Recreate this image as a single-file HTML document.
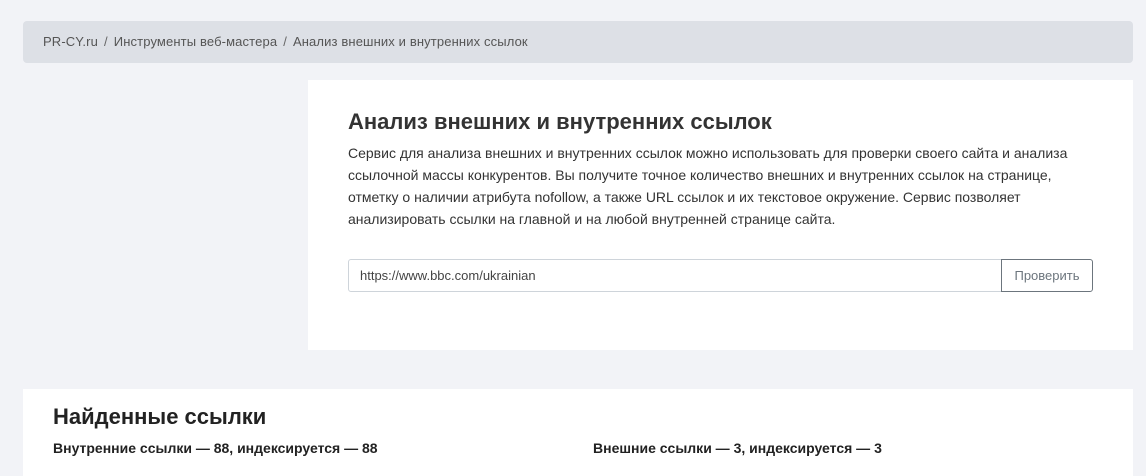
<!DOCTYPE html>
<html><head><meta charset="utf-8"><style>
*{margin:0;padding:0;box-sizing:border-box}
body{width:1146px;height:476px;overflow:hidden;background:#f2f3f7;font-family:"Liberation Sans",sans-serif;color:#333;position:relative}
.bc{position:absolute;left:23px;top:21px;width:1110px;height:42px;background:#dde0e6;border-radius:4px;font-size:13px;letter-spacing:0.13px;color:#555;line-height:42px;padding-left:20px}
.bc span{margin:0 6px;color:#666}
.card{position:absolute;left:308px;top:80px;width:825px;height:270px;background:#fff}
h1{position:absolute;left:40px;top:29px;font-size:22px;font-weight:bold;color:#333}
p{position:absolute;left:40px;top:62px;width:720px;font-size:14px;line-height:22px;color:#333}
.inp{position:absolute;left:40px;top:179px;width:654px;height:33px;border:1px solid #ced4da;border-radius:3px 0 0 3px;font-size:13px;line-height:31px;padding-left:11px;color:#444}
.btn{position:absolute;left:693px;top:179px;width:92px;height:33px;border:1px solid #6c757d;border-radius:0 3px 3px 0;font-size:13px;line-height:31px;text-align:center;color:#6c757d}
.card2{position:absolute;left:23px;top:389px;width:1110px;height:87px;background:#fff}
h2{position:absolute;left:30px;top:15px;font-size:22px;font-weight:bold;color:#222}
.s{position:absolute;top:51px;font-size:14px;font-weight:bold;color:#222}
</style></head><body>
<div class="bc">PR-CY.ru<span>/</span>Инструменты веб-мастера<span>/</span>Анализ внешних и внутренних ссылок</div>
<div class="card">
<h1>Анализ внешних и внутренних ссылок</h1>
<p>Сервис для анализа внешних и внутренних ссылок можно использовать для проверки своего сайта и анализа ссылочной массы конкурентов. Вы получите точное количество внешних и внутренних ссылок на странице, отметку о наличии атрибута nofollow, а также URL ссылок и их текстовое окружение. Сервис позволяет анализировать ссылки на главной и на любой внутренней странице сайта.</p>
<div class="inp">https://www.bbc.com/ukrainian</div>
<div class="btn">Проверить</div>
</div>
<div class="card2">
<h2>Найденные ссылки</h2>
<div class="s" style="left:30px">Внутренние ссылки — 88, индексируется — 88</div>
<div class="s" style="left:570px">Внешние ссылки — 3, индексируется — 3</div>
</div>
</body></html>
